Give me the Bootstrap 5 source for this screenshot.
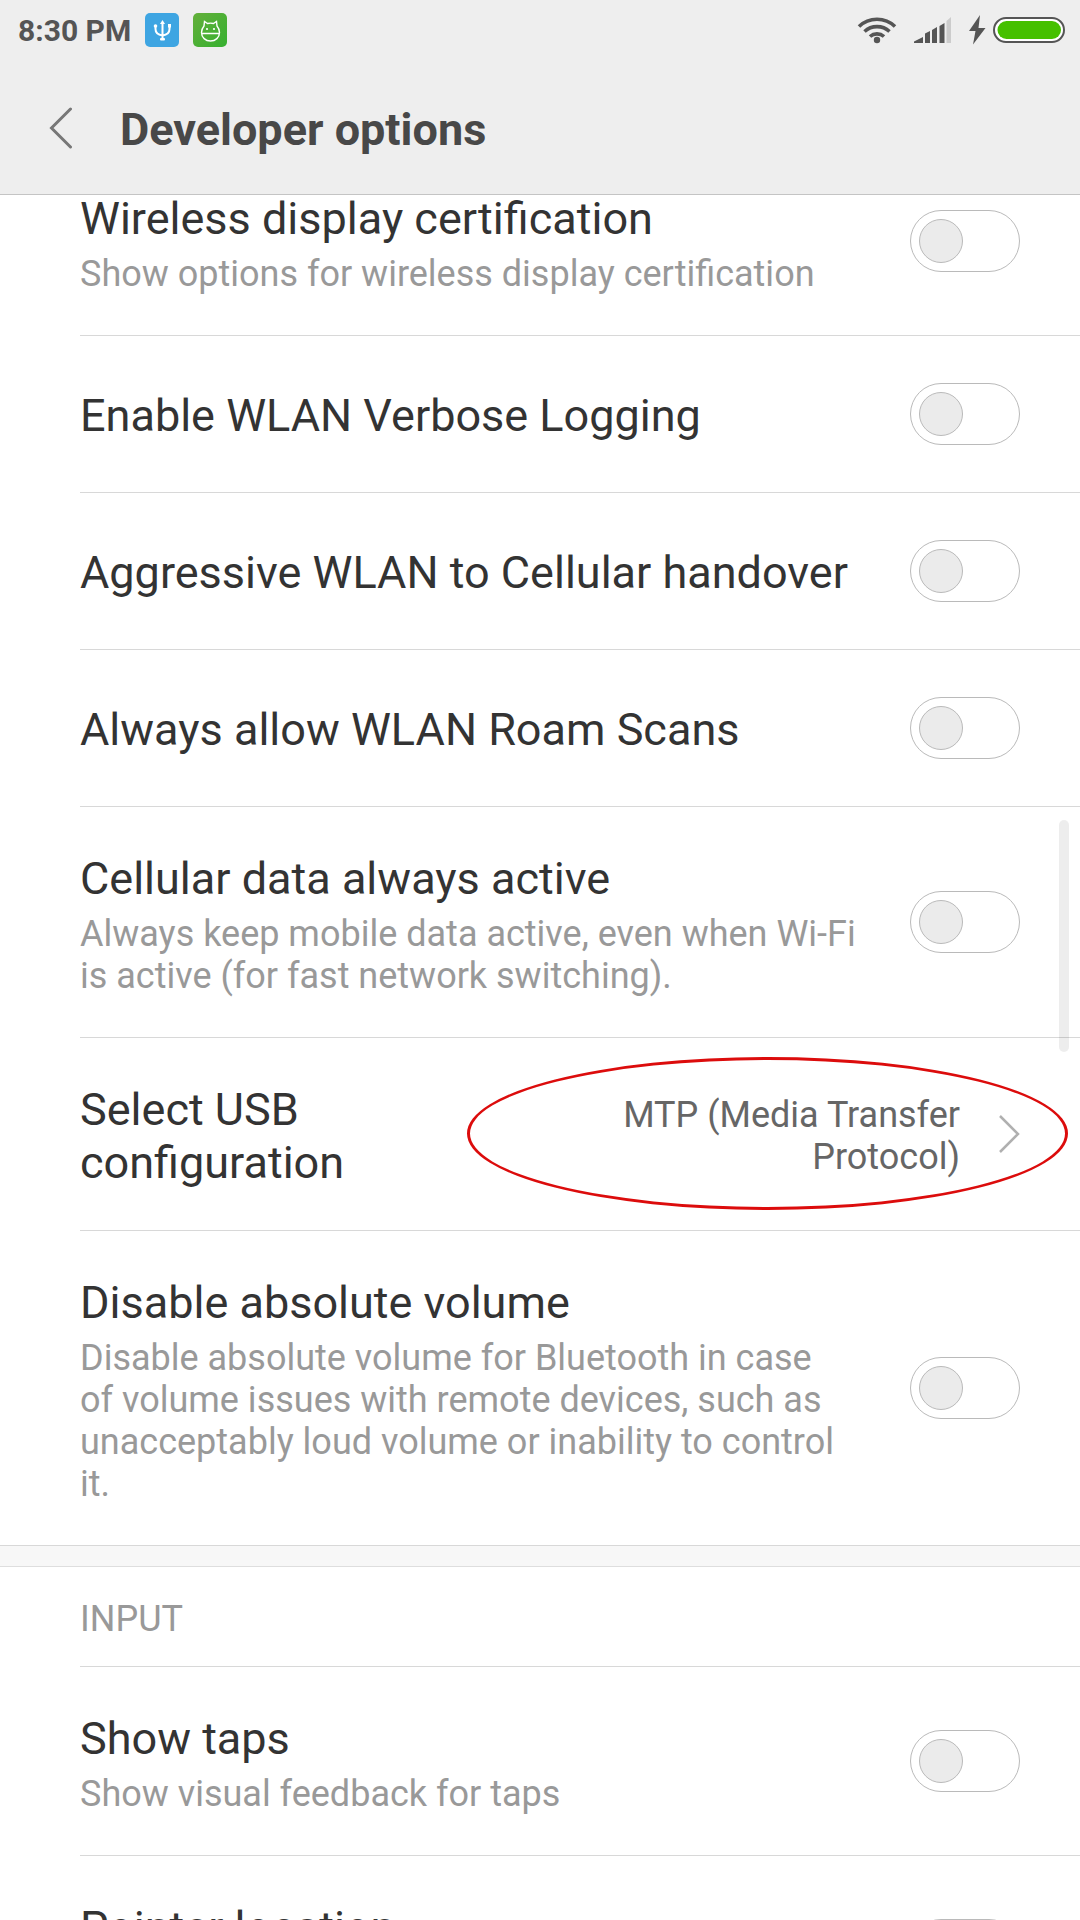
<!DOCTYPE html>
<html lang="en">
<head>
<meta charset="utf-8">
<meta name="viewport" content="width=device-width, initial-scale=1">
<title>Developer options</title>
<link href="https://cdn.jsdelivr.net/npm/bootstrap@5.3.0/dist/css/bootstrap.min.css" rel="stylesheet">
<style>
body { font-family: Roboto, "Noto Sans", sans-serif; background: #fff; color: #333; }
.screen { height: 100vh; }
.topbar { background: #eee; border-bottom: 1px solid #c4c4c4; color: #484848; }
.statusbar { height: 60px; padding: 0 15px 0 18px; font-size: 30px; line-height: 36px; color: #555; }
.clock { margin-right: 14px; padding-top: 2px; }
.app-icons { gap: 14px; }
.titlebar { height: 134px; padding: 0 48px; gap: 46px; }
.titlebar h1 { font-size: 45px; line-height: 53px; padding-top: 4px; }
.back-btn { width: 26px; }
/* the list is scrolled slightly under the top bar */
.settings { margin-top: -48px; }
.setting { margin-left: 80px; padding: 40px 60px 40px 0; min-height: 157px; gap: 48px; border-bottom: 1px solid #d8d8d8; }
.setting.group-end { margin-left: 0; padding-left: 80px; }
.setting > label { padding-top: 2px; }
.setting > label.two-part { padding-top: 5px; }
.setting-title { font-size: 45px; line-height: 53px; }
.setting-sub { font-size: 36px; line-height: 42px; margin-top: 8px; color: #999; }
.setting-value { font-size: 36px; line-height: 42px; color: #666; }
.setting-link { color: #333; gap: 38px; padding-top: 41px; padding-bottom: 41px; }
.pair { gap: 40px; padding-top: 4px; }
.group-gap { height: 21px; background: #f7f7f7; border-bottom: 1px solid #dedede; }
.group-head { margin-left: 80px; padding: 31px 0 26px; font-size: 36px; line-height: 42px; font-weight: 400; color: #999; border-bottom: 1px solid #d8d8d8; }
.toggle.form-check-input { width: 110px; height: 62px; margin: 0; padding: 8px; border: 1px solid #bababa; border-radius: 31px; background: #fff; }
.toggle::before { content: ""; display: block; width: 44px; height: 44px; border: 1px solid #bababa; border-radius: 50%; background: #ebebeb; }
.toggle:checked::before { margin-left: auto; background: #45c000; }
.callout-ring { top: 19px; right: 12px; bottom: 21px; width: 601px; border: 3px solid #dc0c0c; border-radius: 50%; pointer-events: none; }
.scroll-thumb { top: 673px; right: 11px; width: 10px; height: 232px; border-radius: 5px; background: rgba(0,0,0,.07); }
</style>
<script src="https://cdn.jsdelivr.net/npm/bootstrap@5.3.0/dist/js/bootstrap.bundle.min.js"></script>
</head>
<body>
<div class="screen d-flex flex-column overflow-hidden">
  <header class="topbar flex-shrink-0 position-relative z-1">
    <div class="statusbar d-flex align-items-center justify-content-between">
      <div class="d-flex align-items-center">
        <span class="clock fw-bold">8:30 PM</span>
        <div class="app-icons d-flex">
          <svg width="34" height="34" viewBox="0 0 34 34" aria-label="USB">
            <rect width="34" height="34" rx="5" fill="#3ea5e2"/>
            <g fill="none" stroke="#fff" stroke-width="2"><path d="M17.500 10v16M10.500 13v3q0 5.500 7 6.500q7-1 7-6.500v-3"/></g>
            <path d="M17.500 7l2.500 4h-5z" fill="#fff"/><circle cx="10.500" cy="13" r="1.800" fill="#fff"/><rect x="23" y="11" width="3" height="3.500" fill="#fff"/><rect x="15" y="25" width="5" height="2.500" rx="1" fill="#fff"/>
          </svg>
          <svg width="34" height="34" viewBox="0 0 34 34" aria-label="Assistant">
            <defs><linearGradient id="leaf" x1="0" y1="0" x2="1" y2="1"><stop offset="0" stop-color="#63af3a"/><stop offset="1" stop-color="#36b030"/></linearGradient></defs>
            <rect width="34" height="34" rx="5" fill="url(#leaf)"/>
            <path d="M11 13L11.500 8.500l3 2q3-.8 6 0l3-2l.5 4.500q2.500 3 2.500 6.500c0 5-4 8.500-9 8.500s-9-3.500-9-8.500q0-3.500 2.500-6.500zM8.500 20.500h18" fill="none" stroke="#fff" stroke-width="1.400"/>
            <circle cx="14" cy="16" r="1.100" fill="#fff"/><circle cx="21" cy="16" r="1.100" fill="#fff"/>
          </svg>
        </div>
      </div>
      <svg width="208" height="36" viewBox="857 12 208 36" aria-label="Wi-Fi, signal, charging">
        <g fill="none" stroke="#555" stroke-width="3.600">
          <path d="M859 26.500a26 26 0 0 1 36 0"/><path d="M864.500 31.500a18.500 18.500 0 0 1 25 0"/><path d="M870 36.500a10.500 10.500 0 0 1 14 0"/>
        </g>
        <circle cx="877" cy="40" r="3.200" fill="#555"/>
        <path d="M914 43v-1.500l9-4.500v6zM925 43v-9.500l5-2.500v12zM932 43v-13l5-3v16zM939.500 43v-17l5-3v20z" fill="#555"/>
        <path d="M946.500 43V21l4.500-4v26z" fill="#ccc"/>
        <path d="M980 15l-11 16h6.500L973 44.500l12.500-16.500h-7z" fill="#555"/>
        <rect x="994" y="18" width="70" height="24" rx="12" fill="#fff" stroke="#555" stroke-width="2"/>
        <rect x="997.500" y="21" width="63.500" height="18" rx="9" fill="#45c000"/>
      </svg>
    </div>
    <div class="titlebar d-flex align-items-center">
      <button type="button" class="back-btn btn p-0 border-0 d-flex" aria-label="Back">
        <svg width="26" height="44" viewBox="0 0 26 44"><path d="M22.500 4L3.500 23l19 19" fill="none" stroke="#777" stroke-width="3" stroke-linecap="round"/></svg>
      </button>
      <h1 class="fw-bold m-0">Developer options</h1>
    </div>
  </header>

  <main class="settings position-relative">
    <div class="setting d-flex align-items-center justify-content-between">
      <label class="two-part" for="s1"><span class="setting-title d-block">Wireless display certification</span><span class="setting-sub d-block">Show options for wireless display certification</span></label>
      <input class="toggle form-check-input flex-shrink-0" type="checkbox" role="switch" id="s1">
    </div>
    <div class="setting d-flex align-items-center justify-content-between">
      <label class="setting-title" for="s2">Enable WLAN Verbose Logging</label>
      <input class="toggle form-check-input flex-shrink-0" type="checkbox" role="switch" id="s2">
    </div>
    <div class="setting d-flex align-items-center justify-content-between">
      <label class="setting-title" for="s3">Aggressive WLAN to Cellular handover</label>
      <input class="toggle form-check-input flex-shrink-0" type="checkbox" role="switch" id="s3">
    </div>
    <div class="setting d-flex align-items-center justify-content-between">
      <label class="setting-title" for="s4">Always allow WLAN Roam Scans</label>
      <input class="toggle form-check-input flex-shrink-0" type="checkbox" role="switch" id="s4">
    </div>
    <div class="setting d-flex align-items-center justify-content-between">
      <label class="two-part" for="s5"><span class="setting-title d-block">Cellular data always active</span><span class="setting-sub d-block">Always keep mobile data active, even when Wi-Fi is active (for fast network switching).</span></label>
      <input class="toggle form-check-input flex-shrink-0" type="checkbox" role="switch" id="s5">
    </div>
    <div class="position-relative">
      <a href="#" class="setting setting-link d-flex align-items-center text-decoration-none">
        <span class="pair d-flex align-items-center flex-grow-1">
          <span class="setting-title col">Select USB configuration</span>
          <span class="setting-value col text-end">MTP (Media Transfer Protocol)</span>
        </span>
        <svg class="flex-shrink-0" width="22" height="40" viewBox="0 0 22 40" aria-hidden="true"><path d="M2 2l18 18L2 38" fill="none" stroke="#b0b0b0" stroke-width="2.500"/></svg>
      </a>
      <div class="callout-ring position-absolute"></div>
    </div>
    <div class="setting group-end d-flex align-items-center justify-content-between">
      <label class="two-part" for="s6"><span class="setting-title d-block">Disable absolute volume</span><span class="setting-sub d-block">Disable absolute volume for Bluetooth in case<br>of volume issues with remote devices, such as unacceptably loud volume or inability to control it.</span></label>
      <input class="toggle form-check-input flex-shrink-0" type="checkbox" role="switch" id="s6">
    </div>
    <div class="group-gap"></div>
    <h2 class="group-head mb-0">INPUT</h2>
    <div class="setting d-flex align-items-center justify-content-between">
      <label class="two-part" for="s7"><span class="setting-title d-block">Show taps</span><span class="setting-sub d-block">Show visual feedback for taps</span></label>
      <input class="toggle form-check-input flex-shrink-0" type="checkbox" role="switch" id="s7">
    </div>
    <div class="setting d-flex align-items-center justify-content-between">
      <label class="two-part" for="s8"><span class="setting-title d-block">Pointer location</span><span class="setting-sub d-block">Screen overlay showing current touch data</span></label>
      <input class="toggle form-check-input flex-shrink-0" type="checkbox" role="switch" id="s8">
    </div>
    <div class="scroll-thumb position-absolute"></div>
  </main>
</div>
</body>
</html>
